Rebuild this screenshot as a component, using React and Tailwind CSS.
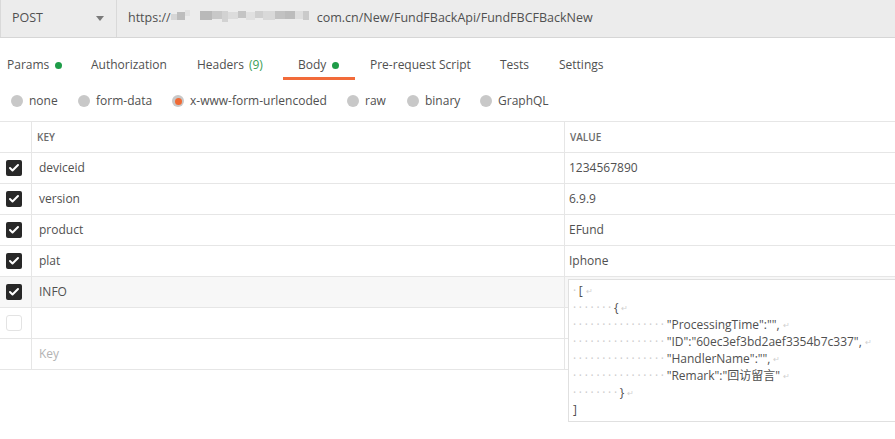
import { Check } from "lucide-react"

const font = { fontFamily: "'Open Sans', 'Noto Sans CJK SC', sans-serif" }

// tab boxes are sized to match the original tab positions
const tabs = [
    { label: "Params", dot: true, box: "w-[91px] pl-[7px]" },
    { label: "Authorization", box: "w-[106px]" },
    { label: "Headers", count: "(9)", box: "w-[86px]" },
    { label: "Body", dot: true, active: true, box: "w-[72px] pl-[15px] mr-[15px]" },
    { label: "Pre-request Script", box: "w-[130px]" },
    { label: "Tests", box: "w-[59px]" },
    { label: "Settings", box: "w-[80px]" },
]

const radios = [
    { label: "none", box: "w-[67px]" },
    { label: "form-data", box: "w-[94px]" },
    { label: "x-www-form-urlencoded", box: "w-[175px]", active: true },
    { label: "raw", box: "w-[60px]" },
    { label: "binary", box: "w-[73px]" },
    { label: "GraphQL", box: "w-[80px]" },
]

const rows = [
    { key: "deviceid", value: "1234567890" },
    { key: "version", value: "6.9.9" },
    { key: "product", value: "EFund" },
    { key: "plat", value: "Iphone" },
]

const mosaic = [
    ["w-[6px]", "bg-[#d6d6d6]", "h-[6px]", "mt-[8px]"],
    ["w-[8px]", "bg-[#bdbdbd]", "h-[8px]", "mt-[6px]"],
    ["w-[5px]", "bg-[#e2e2e2]", "h-[6px]", "mt-[4px]"],
    ["w-[10px]", "bg-[#ececec]", "h-[6px]", "mt-[6px]"],
    ["w-[12px]", "bg-[#b9b9b9]", "h-[9px]", "mt-[5px]"],
    ["w-[10px]", "bg-[#c8c8c8]", "h-[8px]", "mt-[5px]"],
    ["w-[6px]", "bg-[#d2d2d2]", "h-[11px]", "mt-[5px]"],
    ["w-[10px]", "bg-[#dcdcdc]", "h-[7px]", "mt-[6px]"],
    ["w-[8px]", "bg-[#c4c4c4]", "h-[7px]", "mt-[5px]"],
    ["w-[9px]", "bg-[#e0e0e0]", "h-[8px]", "mt-[6px]"],
    ["w-[8px]", "bg-[#cfcfcf]", "h-[7px]", "mt-[5px]"],
    ["w-[12px]", "bg-[#d9d9d9]", "h-[9px]", "mt-[5px]"],
    ["w-[10px]", "bg-[#c2c2c2]", "h-[8px]", "mt-[5px]"],
    ["w-[10px]", "bg-[#bcbcbc]", "h-[8px]", "mt-[5px]"],
    ["w-[8px]", "bg-[#dedede]", "h-[8px]", "mt-[5px]"],
    ["w-[6px]", "bg-[#cacaca]", "h-[9px]", "mt-[5px]"],
]

const jsonLines = [
    { dots: 1, text: "[" },
    { dots: 7, text: "{" },
    { dots: 16, text: "\"ProcessingTime\":\"\"," },
    { dots: 16, text: "\"ID\":\"60ec3ef3bd2aef3354b7c337\"," },
    { dots: 16, text: "\"HandlerName\":\"\"," },
    { dots: 16, text: "\"Remark\":\"回访留言\"" },
    { dots: 8, text: "}" },
    { dots: 0, text: "]", noReturn: true },
]

function CheckBox({ checked }) {
    if (!checked) {
        return <div className="h-4 w-4 rounded-[3px] border border-[#e3e3e3] bg-white" />
    }
    return (
        <div className="h-4 w-4 rounded-[2px] bg-[#282828] flex items-center justify-center">
            <Check className="h-3 w-3 text-white" strokeWidth={4} />
        </div>
    )
}

function Row({ checked, keyText, value, placeholder, hover, children }) {
    return (
        <div className={`flex h-[31px] border-b border-[#e6e6e6] ${hover ? "bg-[#f7f7f7]" : ""}`}>
            <div className="w-[32px] border-r border-[#e6e6e6] flex items-center justify-center pr-[3px]">
                {checked !== undefined && <CheckBox checked={checked} />}
            </div>
            <div className={`w-[533px] border-r border-[#e6e6e6] pl-[7px] flex items-center ${placeholder ? "text-[#b3b3b3]" : "text-[#505050]"}`}>
                {keyText}
            </div>
            <div className="relative flex-1 pl-[4px] flex items-center text-[#505050]">
                {value}
                {children}
            </div>
        </div>
    )
}

export default function App() {
    return (
        <div className="w-[895px] h-[439px] bg-white text-[12px] overflow-hidden" style={font}>
            <div className="flex h-[38px] bg-[#ececec] border-b border-[#d6d6d6]">
                <div className="w-[117px] border-r border-l border-[#d9d9d9] flex items-center justify-between pl-[11px] pr-[12px] text-[#505050] text-[12.5px]">
                    <span>POST</span>
                    <span className="w-0 h-0 border-l-[4px] border-r-[4px] border-t-[5px] border-l-transparent border-r-transparent border-t-[#7a7a7a]" />
                </div>
                <div className="flex items-center pl-[11px] text-[#505050] text-[12.5px]">
                    <span>https://</span>
                    <div className="flex items-start h-[26px] w-[146px] mt-[1px]">
                        {mosaic.map((m, i) => (
                            <div key={i} className={m.join(" ")} />
                        ))}
                    </div>
                    <span>com.cn/New/FundFBackApi/FundFBCFBackNew</span>
                </div>
            </div>

            <div className="flex h-[42px] text-[#505050]">
                {tabs.map((t) => (
                    <div
                        key={t.label}
                        className={`flex items-start pt-[19px] leading-[16px] shrink-0 ${t.box} ${t.active ? "border-b-[3px] border-[#f26b3a]" : ""}`}
                    >
                        <span>{t.label}</span>
                        {t.count && <span className="ml-[5px] text-[#3a9e55]">{t.count}</span>}
                        {t.dot && <span className="ml-[6px] mt-[5px] h-[7px] w-[7px] rounded-full bg-[#1e9c48]" />}
                    </div>
                ))}
            </div>

            <div className="flex items-center h-[41px] pl-[11px] pt-[1px] text-[#505050]">
                {radios.map((r) => (
                    <div key={r.label} className={`flex items-center shrink-0 ${r.box}`}>
                        {r.active ? (
                            <span className="h-[12px] w-[12px] rounded-full bg-[#c8c8c8] flex items-center justify-center">
                                <span className="h-[7px] w-[7px] rounded-full bg-[#f06a35]" />
                            </span>
                        ) : (
                            <span className="h-[12px] w-[12px] rounded-full bg-[#c8c8c8]" />
                        )}
                        <span className="ml-[6px]">{r.label}</span>
                    </div>
                ))}
            </div>

            <div className="border-t border-[#e6e6e6]">
                <div className="flex h-[31px] border-b border-[#e6e6e6] text-[10px] font-semibold text-[#6b6b6b]">
                    <div className="w-[32px] border-r border-[#e6e6e6]" />
                    <div className="w-[533px] border-r border-[#e6e6e6] pl-[5px] flex items-center">KEY</div>
                    <div className="flex-1 pl-[5px] flex items-center">VALUE</div>
                </div>
                {rows.map((r) => (
                    <Row key={r.key} checked keyText={r.key} value={r.value} />
                ))}
                <Row checked hover keyText="INFO">
                    <div className="absolute left-[3px] top-[2px] w-[340px] h-[143px] bg-white border border-[#e0e0e0] pl-[4px] pt-[2px] z-10 text-[12px] leading-[17px] text-[#505050] whitespace-pre">
                        {jsonLines.map((l, i) => (
                            <div key={i} className="flex">
                                {l.dots > 0 && (
                                    <span className="text-[#cccccc] tracking-[2.7px]">{"·".repeat(l.dots)}</span>
                                )}
                                <span>{l.text}</span>
                                {!l.noReturn && <span className="ml-[3px] text-[8px] text-[#d0d0d0]">↵</span>}
                            </div>
                        ))}
                    </div>
                </Row>
                <Row checked={false} keyText="" />
                <Row keyText="Key" placeholder />
            </div>
        </div>
    )
}
